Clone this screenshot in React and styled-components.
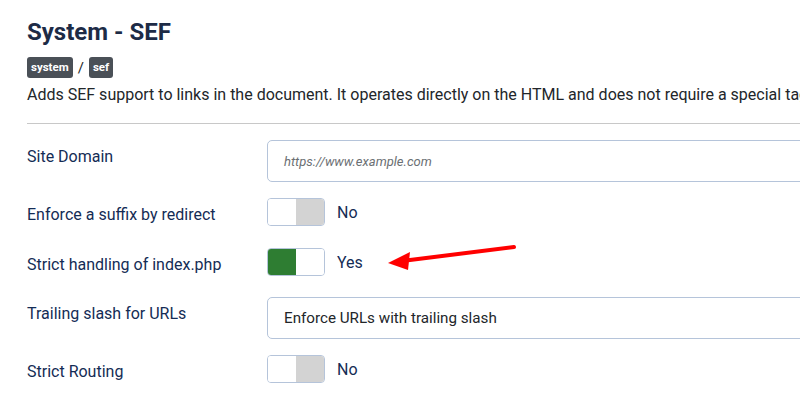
import React from 'react';
import styled, { createGlobalStyle } from 'styled-components';

const GlobalStyle = createGlobalStyle`
  html, body {
    margin: 0;
    padding: 0;
    background: #fff;
    overflow: hidden;
  }
  body {
    font-family: Roboto, "Noto Sans", sans-serif;
  }
`;

const Page = styled.div`
  position: relative;
  width: 800px;
  height: 414px;
  padding: 16px 0 0 27px;
  box-sizing: border-box;
  overflow: hidden;
`;

const Title = styled.h1`
  margin: 0;
  font-size: 24px;
  line-height: 32px;
  font-weight: 700;
  color: #1d2b46;
`;

const Tags = styled.div`
  display: flex;
  align-items: center;
  gap: 5px;
  margin-top: 9px;
  color: #22262a;
  font-size: 15px;
`;

const Badge = styled.span`
  display: inline-block;
  background: #4a5057;
  color: #fff;
  font-size: 11.5px;
  font-weight: 700;
  line-height: 21px;
  height: 21px;
  padding: 0 4px;
  border-radius: 3px;
`;

// the sentence runs past the right edge, as in the screenshot
const Description = styled.p`
  margin: 6px 0 0;
  font-size: 16px;
  line-height: 22px;
  color: #22262a;
  white-space: nowrap;
`;

const Divider = styled.hr`
  margin: 17px 0 16px;
  border: 0;
  border-top: 1px solid #c8c8c8;
`;

const Form = styled.div`
  display: flex;
  flex-direction: column;
`;

const Row = styled.div`
  display: flex;
  align-items: flex-start;
  margin-bottom: ${p => p.gap}px;
`;

const Label = styled.div`
  width: 240px;
  flex: none;
  padding-top: 7px;
  font-size: 16px;
  line-height: 20px;
  color: #142c55;
`;

const TextBox = styled.div`
  flex: none;
  width: 560px;
  height: 42px;
  box-sizing: border-box;
  border: 1px solid #b5c4da;
  border-radius: 5px;
  padding: 0 16px;
  display: flex;
  align-items: center;
  font-size: ${p => (p.placeholder ? '13px' : '15.2px')};
  font-style: ${p => (p.placeholder ? 'italic' : 'normal')};
  color: ${p => (p.placeholder ? '#6b6f73' : '#22262a')};
`;

const Switch = styled.div`
  display: flex;
  align-items: center;
  gap: 12px;
`;

const Track = styled.div`
  width: 58px;
  height: 28px;
  box-sizing: border-box;
  border: 1px solid #b5c4da;
  border-radius: 4px;
  overflow: hidden;
  display: flex;
`;

const Half = styled.div`
  flex: 1;
  background: ${p => p.fill || '#fff'};
`;

const State = styled.span`
  font-size: 16px;
  color: #142c55;
`;

const Arrow = styled.svg`
  position: absolute;
  left: 380px;
  top: 238px;
`;

const Toggle = ({ on }) => (
  <Switch>
    <Track>
      <Half fill={on ? '#2e7d32' : '#fff'} />
      <Half fill={on ? '#fff' : '#d3d3d3'} />
    </Track>
    <State>{on ? 'Yes' : 'No'}</State>
  </Switch>
);

export default function App() {
  return (
    <Page>
      <GlobalStyle />
      <Title>System - SEF</Title>
      <Tags>
        <Badge>system</Badge>/<Badge>sef</Badge>
      </Tags>
      <Description>
        Adds SEF support to links in the document. It operates directly on the HTML and does not require a special tag.
      </Description>
      <Divider />
      <Form>
        <Row gap={16}>
          <Label>Site Domain</Label>
          <TextBox placeholder>https://www.example.com</TextBox>
        </Row>
        <Row gap={22}>
          <Label>Enforce a suffix by redirect</Label>
          <Toggle />
        </Row>
        <Row gap={21}>
          <Label>Strict handling of index.php</Label>
          <Toggle on />
        </Row>
        <Row gap={16}>
          <Label>Trailing slash for URLs</Label>
          <TextBox>Enforce URLs with trailing slash</TextBox>
        </Row>
        <Row gap={0}>
          <Label>Strict Routing</Label>
          <Toggle />
        </Row>
      </Form>
      <Arrow width="140" height="40" viewBox="0 0 140 40">
        <line x1="134" y1="9" x2="22" y2="23" stroke="#f00" strokeWidth="4" strokeLinecap="round" />
        <polygon points="8,25 30,14 28,32" fill="#f00" />
      </Arrow>
    </Page>
  );
}
